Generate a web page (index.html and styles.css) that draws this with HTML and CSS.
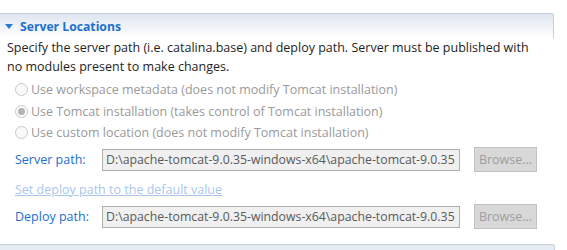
FILE: index.html
```html
<!DOCTYPE html>
<html lang="en">
<head>
    <meta charset="UTF-8">
    <title>Server Locations</title>
    <link rel="stylesheet" href="styles.css">
</head>
<body>
    <div class="section">
        <div class="section-header">
            <span class="twisty"></span>
            <span class="section-title">Server Locations</span>
        </div>
        <p class="desc">Specify the server path (i.e. catalina.base) and deploy path. Server must be published with no modules present to make changes.</p>

        <div class="radios">
            <label class="radio"><span class="dot"></span>Use workspace metadata (does not modify Tomcat installation)</label>
            <label class="radio checked"><span class="dot"></span>Use Tomcat installation (takes control of Tomcat installation)</label>
            <label class="radio"><span class="dot"></span>Use custom location (does not modify Tomcat installation)</label>
        </div>

        <div class="field-row first">
            <span class="field-label">Server path:</span>
            <span class="field-input">D:\apache-tomcat-9.0.35-windows-x64\apache-tomcat-9.0.35</span>
            <span class="browse">Browse...</span>
        </div>
        <div class="link-row">
            <span class="link">Set deploy path to the default value</span>
        </div>
        <div class="field-row">
            <span class="field-label">Deploy path:</span>
            <span class="field-input">D:\apache-tomcat-9.0.35-windows-x64\apache-tomcat-9.0.35</span>
            <span class="browse">Browse...</span>
        </div>
    </div>
    <div class="next-section"></div>
</body>
</html>
```
FILE: styles.css
```css
body {
    margin: 0;
    background: #fff;
    font-family: "Open Sans", "Noto Sans CJK SC", sans-serif;
    font-size: 12.5px;
    color: #222;
    width: 567px;
    height: 250px;
    overflow: hidden;
}
.section {
    width: 554px;
    margin-top: 13px;
}
.section-header {
    height: 24px;
    border: 1px solid #c5d0de;
    border-left: none;
    border-bottom: none;
    border-top-right-radius: 3px;
    background: linear-gradient(#dfe6f1, #ffffff);
    display: flex;
    align-items: center;
    padding-left: 5px;
}
.twisty {
    width: 0;
    height: 0;
    border-left: 4px solid transparent;
    border-right: 4px solid transparent;
    border-top: 5px solid #2a7ad3;
    margin-right: 7px;
}
.section-title {
    font-weight: bold;
    color: #1c6fd0;
    font-size: 12.2px;
}
.desc {
    margin: 0;
    padding: 0 15px 0 7px;
    line-height: 19px;
    color: #1e1e1e;
}
.radios {
    display: flex;
    flex-direction: column;
    padding: 3px 0 0 15px;
}
.radio {
    display: flex;
    align-items: center;
    height: 21.5px;
    color: #9a9a9a;
}
.dot {
    width: 11px;
    height: 11px;
    border: 1px solid #c9c9c9;
    border-radius: 50%;
    background: #fafafa;
    margin-right: 3px;
    display: flex;
    align-items: center;
    justify-content: center;
}
.radio.checked .dot::after {
    content: "";
    width: 7px;
    height: 7px;
    border-radius: 50%;
    background: #b4b4b4;
}
.field-row {
    display: flex;
    align-items: center;
    padding-left: 15px;
    height: 26px;
}
.field-row.first {
    margin-top: 3px;
}
.field-label {
    width: 87px;
    color: #1a6fd0;
}
.field-input {
    width: 353px;
    height: 20px;
    line-height: 20px;
    border: 1px solid #b0b0b0;
    background: #f0f0f0;
    color: #5a5a5a;
    padding-left: 3px;
    font-size: 12.3px;
    white-space: nowrap;
    overflow: hidden;
}
.browse {
    margin-left: 14px;
    width: 61px;
    height: 23px;
    line-height: 23px;
    border: 1px solid #c2c2c2;
    background: #d8d8d8;
    color: #9e9e9e;
    text-align: center;
}
.link-row {
    padding-left: 15px;
    height: 29px;
    display: flex;
    align-items: center;
    padding-top: 2px;
}
.link {
    color: #a9c6ea;
    text-decoration: underline;
}
.next-section {
    width: 554px;
    height: 10px;
    margin-top: 14px;
    border-top: 1px solid #c5d0de;
    border-right: 1px solid #c5d0de;
    border-top-right-radius: 3px;
    background: #e6ecf4;
}
```
